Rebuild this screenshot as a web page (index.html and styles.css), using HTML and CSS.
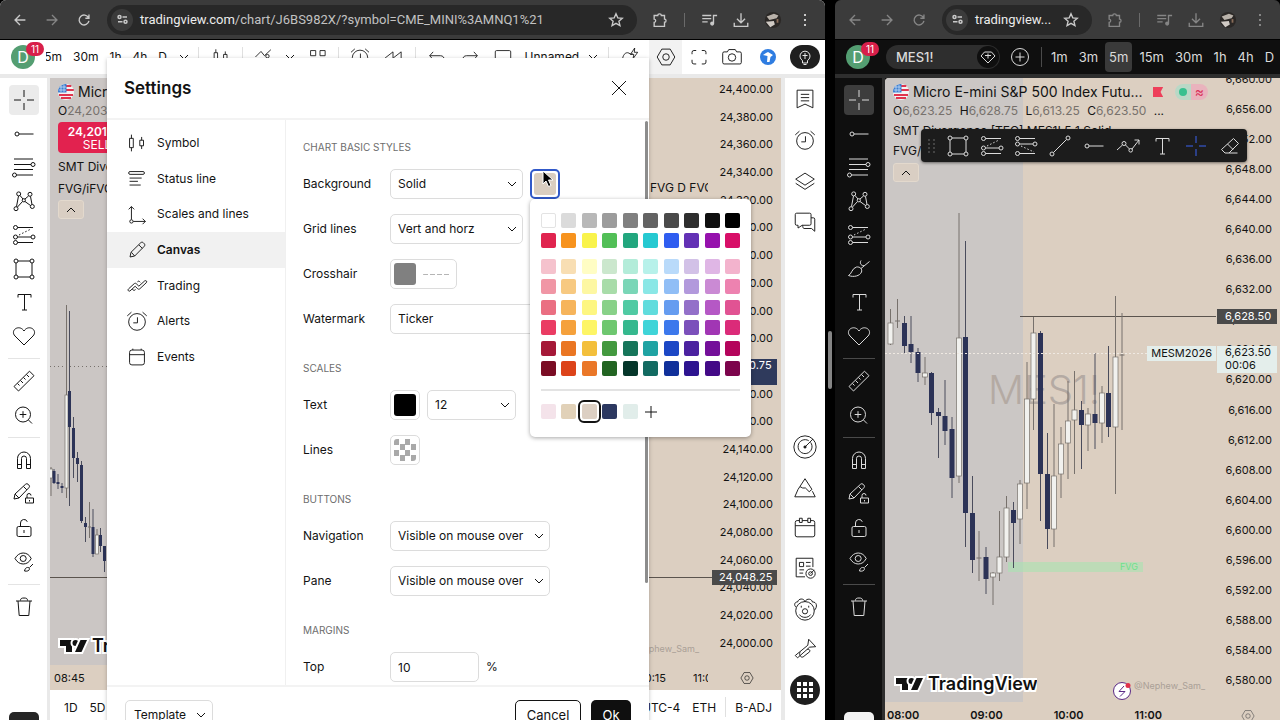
FILE: index.html
```html
<!DOCTYPE html>
<html lang="en">
<head>
	<meta charset="UTF-8">
	<meta name="viewport" content="width=device-width">
	<title>MNQ1! chart settings</title>
	<link rel="stylesheet" href="styles.css">
	<script src="chart.js" defer></script>
</head>
<body>

<!-- icon set, 28px grid unless noted -->
<svg class="sprite" aria-hidden="true">
	<symbol id="i-cross" viewBox="0 0 28 28"><path d="M14 4v7M14 17v7M4 14h7M17 14h7"/></symbol>
	<symbol id="i-hline" viewBox="0 0 28 28"><circle cx="7" cy="14" r="2"/><path d="M9 14h14.500"/></symbol>
	<symbol id="i-fib" viewBox="0 0 28 28"><path d="M4 6h19M4 11.500h17M4 16.500h19M6.500 22H23"/><circle cx="23" cy="11.500" r="2"/><circle cx="4.500" cy="22" r="2"/></symbol>
	<symbol id="i-pattern" viewBox="0 0 28 28"><path d="M6.500 19.500l2-10.500M10 8.500l3 3.500M15 12l3.500-3M20.500 9.500l1.500 8M20.500 18.500L15 14.500M12.500 14.500l-5 5.500"/><circle cx="8.700" cy="6.900" r="2"/><circle cx="20" cy="7.300" r="2"/><circle cx="13.800" cy="13.300" r="1.600"/><circle cx="22.300" cy="19.500" r="2"/><circle cx="6" cy="21.700" r="2"/></symbol>
	<symbol id="i-long" viewBox="0 0 28 28"><path d="M7.500 6.500H23M7.500 16h13.500M7.500 21.500H23"/><path d="M9 14l12-6" stroke-dasharray="1.500 2"/><circle cx="5.500" cy="6.500" r="2"/><circle cx="23" cy="16" r="2"/><circle cx="5.500" cy="16" r="2"/><circle cx="5.500" cy="21.500" r="2"/></symbol>
	<symbol id="i-short" viewBox="0 0 28 28"><path d="M7.500 6.500H23M7.500 12h13.500M7.500 21.500H23"/><path d="M9 14l13 6" stroke-dasharray="1.500 2"/><circle cx="5.500" cy="6.500" r="2"/><circle cx="23" cy="12" r="2"/><circle cx="5.500" cy="12" r="2"/><circle cx="5.500" cy="21.500" r="2"/></symbol>
	<symbol id="i-rect" viewBox="0 0 28 28"><path d="M8 6h12M8 22h12M6 8v12M22 8v12"/><circle cx="6" cy="6" r="2"/><circle cx="22" cy="6" r="2"/><circle cx="6" cy="22" r="2"/><circle cx="22" cy="22" r="2"/></symbol>
	<symbol id="i-text" viewBox="0 0 28 28"><path d="M8 9.500V6.500h13v3M14.500 6.500v15.500M12 22h5"/></symbol>
	<symbol id="i-heart" viewBox="0 0 28 28"><path d="M14 23L5 14C2.300 11.200 3.300 7.500 6.500 6.200c2.800-1.100 5.700 0 7.500 2.800 1.800-2.800 4.700-3.900 7.500-2.800 3.200 1.300 4.200 5 1.500 7.800z"/></symbol>
	<symbol id="i-ruler" viewBox="0 0 28 28"><path d="M4 19.500L19.500 4.200l4.500 4.500L8.500 24zM7.500 16.500l2 2M10.500 13.500l2.500 2.500M13.500 10.500l2 2M16.500 7.500l2.500 2.500"/></symbol>
	<symbol id="i-zoom" viewBox="0 0 28 28"><circle cx="13" cy="13.500" r="7.500"/><path d="M18.500 19l3.500 3.500M13 10.200v6.600M9.700 13.500h6.600"/></symbol>
	<symbol id="i-magnet" viewBox="0 0 28 28"><path d="M7.500 22.500V12.500a6.500 6.500 0 0 1 13 0v10h-4v-10a2.500 2.500 0 0 0-5 0v10zM7.500 18.500h4M16.500 18.500h4"/></symbol>
	<symbol id="i-penlock" viewBox="0 0 28 28"><path d="M4 19l1-5L15.500 4.300a2 2 0 0 1 2.700 0l.7.700a2 2 0 0 1 0 2.700L9 18zM13.500 6.500l3.400 3.400M5.200 14.200L9 18"/><path d="M15.500 18h8v5h-8zM17 18v-2.500a2 2 0 0 1 4 0M19.500 20v1.500"/></symbol>
	<symbol id="i-lock" viewBox="0 0 28 28"><rect x="7" y="12.500" width="14" height="10" rx="1.500"/><path d="M10.500 12.500V9a3.500 3.500 0 0 1 6.800-1.200M14 16v3"/></symbol>
	<symbol id="i-eye" viewBox="0 0 28 28"><path d="M5 10.500C7 7 9.700 5 13.200 5s6.300 2 8 5.500C19.500 14 16.700 16 13.200 16S7 14 5 10.500z"/><circle cx="13.200" cy="10.500" r="3"/><path d="M14.500 23c.5-3 2.500-4.200 4.500-3.200 1.500 2-1 4-4.500 3.200zM19.500 19.500l3.500-3.500"/></symbol>
	<symbol id="i-trash" viewBox="0 0 28 28"><path d="M6 8h16M8 8l1.200 14.500h9.600L20 8M10.500 7.500c0-2 1-2.500 3.500-2.500s3.500.5 3.500 2.500"/></symbol>
	<symbol id="i-brush" viewBox="0 0 28 28"><path d="M3.500 20.500c3-1 3.500-7.500 8-8.500 3.500-.500 6 2 5 5-1.500 4-8 5.500-13 3.500zM16 13.500L24.500 6.500M16 5.500c-2 3.500 1 5.500 3 5"/></symbol>
	<symbol id="i-trend" viewBox="0 0 28 28"><circle cx="6" cy="22" r="2"/><circle cx="22" cy="6" r="2"/><path d="M7.500 20.500l13-13"/></symbol>
	<symbol id="i-path" viewBox="0 0 28 28"><path d="M3 18l5.500-5M11.500 13l4 4M18 17l7-9M20.500 8H25v4.500"/><circle cx="10" cy="11.500" r="2"/><circle cx="16.700" cy="18.300" r="1.800"/></symbol>
	<symbol id="i-eraser" viewBox="0 0 28 28"><path d="M5.500 17.500L17.500 6.500l5 5-9.500 9.500H9zM11.500 12l5.500 5.500M13 21h8.500"/></symbol>
	<symbol id="i-candles" viewBox="0 0 28 28"><path d="M8 5v4M8 19v4M6 9h4v10H6zM19 7.500V11M19 17v3.500M17 11h4v6h-4z"/></symbol>
	<symbol id="i-indicators" viewBox="0 0 28 28"><path d="M4 14l6.500-6.500 4 5L22 5.500M4 22l7-5"/><circle cx="18" cy="13" r="2"/></symbol>
	<symbol id="i-layouts" viewBox="0 0 28 28"><path d="M6.500 6.500h6v6h-6zM17.500 6.500h6v6h-6zM6.500 17h6v5h-6zM17.500 17h6v5h-6z"/></symbol>
	<symbol id="i-alarm" viewBox="0 0 28 28"><circle cx="14" cy="15" r="9"/><path d="M14.500 10v6H10M3.500 8.500L8 4.500M24.500 8.500L20 4.500"/></symbol>
	<symbol id="i-replay" viewBox="0 0 28 28"><path d="M14 8L5 15l9 7zM23.500 8l-9 7 9 7z"/></symbol>
	<symbol id="i-undo" viewBox="0 0 28 28"><path d="M9.500 8L5.500 12.500l4 4.500M5.500 12.500H18c3 0 4.500 2 4.500 5"/></symbol>
	<symbol id="i-redo" viewBox="0 0 28 28"><path d="M18.500 8l4 4.500-4 4.500M22.500 12.500H10c-3 0-4.500 2-4.500 5"/></symbol>
	<symbol id="i-frame" viewBox="0 0 28 28"><rect x="5" y="6.500" width="18" height="15" rx="1.500"/></symbol>
	<symbol id="i-sketch" viewBox="0 0 28 28"><path d="M5 20c0-6 2-11 6-11 3 0 3 3 6 1M19.500 3.500l-5 7.500h4l-1 5 5.500-7.500h-4z"/></symbol>
	<symbol id="i-hex" viewBox="0 0 28 28"><path d="M9.500 5.500h9l5 8.500-5 8.500h-9L4.500 14z"/><circle cx="14" cy="14" r="3.500"/></symbol>
	<symbol id="i-full" viewBox="0 0 28 28"><path d="M6.500 11V9a2 2 0 0 1 2-2h2.500M17 7h2.500a2 2 0 0 1 2 2v2M21.500 17v2.500a2 2 0 0 1-2 2H17M11 21.500H8.500a2 2 0 0 1-2-2V17"/></symbol>
	<symbol id="i-camera" viewBox="0 0 28 28"><path d="M5.500 8.500H9l1.500-2.500h7L19 8.500h3.500a1.500 1.500 0 0 1 1.500 1.500v10a1.500 1.500 0 0 1-1.500 1.500h-17A1.500 1.500 0 0 1 4 20V10a1.500 1.500 0 0 1 1.500-1.500z"/><circle cx="14" cy="14.500" r="4"/></symbol>
	<symbol id="i-chev" viewBox="0 0 10 10"><path d="M1 3l4 4 4-4"/></symbol>
	<symbol id="i-plus" viewBox="0 0 28 28"><path d="M14 8v12M8 14h12"/></symbol>
	<symbol id="i-close" viewBox="0 0 28 28"><path d="M7 7l14 14M21 7L7 21"/></symbol>
	<symbol id="i-status" viewBox="0 0 28 28"><rect x="5" y="6" width="17" height="3" rx="1.500"/><path d="M6 13h13M6 16.500h9M6 20.500h12"/></symbol>
	<symbol id="i-scales" viewBox="0 0 28 28"><path d="M8 20V6M5 9l3-3 3 3M10 22h13M20 19l3 3-3 3"/><circle cx="8" cy="22" r="1.800"/></symbol>
	<symbol id="i-pencil" viewBox="0 0 28 28"><path d="M6.500 21.500l1-5L18 6.200c.8-.8 2-.8 2.800 0l1 1c.8.800.8 2 0 2.800L11.500 20.500zM16 8.500l3.700 3.700M8 16.500l3.500 4"/></symbol>
	<symbol id="i-trading" viewBox="0 0 28 28"><path d="M5 17l6-5.500c.8-.6 1.600-.6 2.200 0L16 14.200l6.300-5.700c1.600-1 2.900.7 1.700 2L17 17c-.8.600-1.500.6-2.200 0L12 14.300l-5.500 5c-1.500 1-3-1-1.500-2.300zM14.500 9.500c.8-1.200 2-.8 3 .5M9 17.500c1 1.500 2.500 1.500 3.500.3"/></symbol>
	<symbol id="i-calendar" viewBox="0 0 28 28"><rect x="6" y="6.500" width="16" height="16" rx="2.500"/><path d="M6 11.500h16M9.500 6.500V5M18.500 6.500V5"/></symbol>
	<symbol id="i-cal2" viewBox="0 0 28 28"><path d="M8 6H5.500A2 2 0 0 0 3.500 8v13.500a2 2 0 0 0 2 2h17a2 2 0 0 0 2-2V8a2 2 0 0 0-2-2H20M11 6h6M3.500 11.500h21M8 3.500h3V8H8zM17 3.500h3V8h-3z"/></symbol>
	<symbol id="i-list" viewBox="0 0 28 28"><path d="M5.500 4.500h17v19L14 19.500l-8.500 4zM9.500 9h9M9.500 12.500h9M9.500 16h9"/></symbol>
	<symbol id="i-layers" viewBox="0 0 28 28"><path d="M14 5.500l10 6.500-10 6.500L4 12zM4 16.500L14 23l10-6.500"/></symbol>
	<symbol id="i-chat" viewBox="0 0 28 28"><path d="M5 4.500h14a1.500 1.500 0 0 1 1.500 1.500v10a1.500 1.500 0 0 1-1.500 1.500H11L6.500 20.500v-3H5A1.500 1.500 0 0 1 3.500 16V6A1.500 1.500 0 0 1 5 4.500zM20.500 9.500h2.500a1.500 1.500 0 0 1 1.500 1.500v13l-3.500-3h-8c-1 0-1.500-1.500-1.500-3.500"/></symbol>
	<symbol id="i-radar" viewBox="0 0 28 28"><circle cx="14" cy="14" r="12"/><path d="M20 9a7.500 7.500 0 1 1-2-1.800M14 14l8.500-8.500"/><circle cx="14" cy="14" r="1.200" fill="currentColor"/></symbol>
	<symbol id="i-pyramid" viewBox="0 0 28 28"><path d="M14 4l7.500 11.500-3 2.500-4-4h-3L8.500 12.500zM6.500 15.500L3 23.500h22l-3-6M6.500 15.500l2-3"/></symbol>
	<symbol id="i-news" viewBox="0 0 28 28"><path d="M14 23.500H4.500v-20h18V13M8 8h4.500v4.500H8zM15 8h5M15 12h5M8 16h5M8 19.500h4"/><circle cx="20" cy="20" r="5"/><circle cx="20" cy="20" r="2"/><path d="M20 20l4-4"/></symbol>
	<symbol id="i-clown" viewBox="0 0 28 28"><circle cx="14" cy="16" r="10"/><circle cx="14" cy="16.500" r="2.800"/><path d="M4.500 12c-3-2-1.500-6 1.500-5.500C7 2.500 12.500 2 14 6c2-4 7.500-3 8 .5 4.500-.5 6 5 2 9M8 20c2.500 4 9.500 4 12 0M10 10.500v2M18 10.500v2"/></symbol>
	<symbol id="i-horn" viewBox="0 0 28 28"><path d="M3.500 21L17 10l1-6.500 7.500 8-6.500.5L6 23.500zM9 17c-2 2 0 7 3 5.500l7-5.500c1-2-1-3-2.500-2.500"/></symbol>
	<symbol id="i-back" viewBox="0 0 20 20"><path d="M16 10H5M10 4.500L4.500 10l5.500 5.500"/></symbol>
	<symbol id="i-fwd" viewBox="0 0 20 20"><path d="M4 10h11M10 4.500l5.500 5.500-5.500 5.500"/></symbol>
	<symbol id="i-reload" viewBox="0 0 20 20"><path d="M15 7.500A5.500 5.500 0 1 0 15.500 11M15.500 4v4H11.500"/></symbol>
	<symbol id="i-tune" viewBox="0 0 20 20"><circle cx="6" cy="6.500" r="2"/><path d="M10 6.500h6M4 13h6"/><circle cx="14" cy="13" r="2"/></symbol>
	<symbol id="i-star" viewBox="0 0 20 20"><path d="M10 3l2 4.600 5 .5-3.800 3.300 1.200 4.900L10 13.700l-4.400 2.600 1.200-4.900L3 8.100l5-.5z"/></symbol>
	<symbol id="i-puzzle" viewBox="0 0 20 20"><path d="M3.500 5h4c0-2.500 4-2.500 4 0H15v4c2.300 0 2.300 3.500 0 3.500V17H3.500v-4.300c2.300-.2 2.300-3.400 0-3.600z"/></symbol>
	<symbol id="i-queue" viewBox="0 0 20 20"><path d="M2.500 5h10M2.500 8.500h10M2.500 12h6M15 14V5H19"/><circle cx="13.500" cy="14" r="1.500" fill="currentColor"/></symbol>
	<symbol id="i-down" viewBox="0 0 20 20"><path d="M10 2.500v10M5.500 8.500l4.500 4.500 4.500-4.500M2.500 13v4h15v-4"/></symbol>
	<symbol id="i-flag" viewBox="0 0 16 16"><circle cx="8" cy="8" r="8" fill="#f4f4f4" stroke="none"/><path d="M8 2h5.300M8 6h7.800M1 11h14M3 14h10" stroke="#e0354f" stroke-width="2"/><path d="M0 8.500A8 8 0 0 1 8.500 0v8.500z" fill="#3c7fd0" stroke="none"/><path d="M2 3h6M1 6h7M3 2v6M6 1v7" stroke="#d6e6fa" stroke-width=".7"/></symbol>
	<symbol id="i-face" viewBox="0 0 20 20"><circle cx="10" cy="10" r="9" fill="#2b2826" stroke="none"/><path d="M3 6l8-3 5 2-2 3-8 2z" fill="#b9b2aa" stroke="none"/><path d="M2 12l9-1 1 4-5 3z" fill="#d0cac4" stroke="none"/><path d="M15 9v4" stroke="#8a6d5a" stroke-width="2"/></symbol>
	<symbol id="i-logo" viewBox="0 0 146 26">
		<g class="logo-ink"><path d="M5 7h12v12h-6v-6H5z"/><circle cx="20.500" cy="10" r="3"/><path d="M25.500 7H32l-5.500 12H20z"/></g>
		<text x="37" y="19" class="logo-word">TradingView</text>
	</symbol>
</svg>

<div class="split">

<section class="window light" aria-label="Nasdaq window">
	<header class="chrome">
		<button class="nav-btn" aria-label="Back"><svg><use href="#i-back"/></svg></button>
		<button class="nav-btn dim" aria-label="Forward"><svg><use href="#i-fwd"/></svg></button>
		<button class="nav-btn" aria-label="Reload"><svg><use href="#i-reload"/></svg></button>
		<div class="omnibox">
			<span class="site-info"><svg><use href="#i-tune"/></svg></span>
			<span class="url">tradingview.com<span class="url-path">/chart/J6BS982X/?symbol=CME_MINI%3AMNQ1%21</span></span>
			<svg><use href="#i-star"/></svg>
		</div>
		<button class="nav-btn" aria-label="Extensions"><svg><use href="#i-puzzle"/></svg></button>
		<span class="chrome-sep"></span>
		<button class="nav-btn" aria-label="Media"><svg><use href="#i-queue"/></svg></button>
		<button class="nav-btn" aria-label="Downloads"><svg><use href="#i-down"/></svg></button>
		<button class="nav-btn" aria-label="Profile"><svg><use href="#i-face"/></svg></button>
		<button class="nav-btn dots" aria-label="Menu"><i></i><i></i><i></i></button>
	</header>

	<div class="topbar">
		<button class="avatar" aria-label="Account">D<span class="badge">11</span></button>
		<div class="intervals">
			<button class="cut">15m</button>
			<button>30m</button>
			<button>1h</button>
			<button>4h</button>
			<button>D</button>
		</div>
		<div class="tools">
			<svg class="chev"><use href="#i-chev"/></svg>
			<i class="vsep"></i>
			<svg><use href="#i-candles"/></svg>
			<i class="vsep"></i>
			<svg><use href="#i-indicators"/></svg>
			<svg class="chev"><use href="#i-chev"/></svg>
			<svg><use href="#i-layouts"/></svg>
			<i class="vsep"></i>
			<svg><use href="#i-alarm"/></svg>
			<svg><use href="#i-replay"/></svg>
			<i class="vsep"></i>
			<svg><use href="#i-undo"/></svg>
			<svg><use href="#i-redo"/></svg>
			<svg><use href="#i-frame"/></svg>
			<button>Unnamed</button>
			<svg class="chev"><use href="#i-chev"/></svg>
			<i class="vsep"></i>
			<svg><use href="#i-sketch"/></svg>
		</div>
		<button class="sq on" aria-label="Settings"><svg><use href="#i-hex"/></svg></button>
		<button class="sq" aria-label="Fullscreen"><svg><use href="#i-full"/></svg></button>
		<button class="sq" aria-label="Snapshot"><svg><use href="#i-camera"/></svg></button>
		<button class="round blue" aria-label="Publish"><svg viewBox="0 0 16 16"><circle cx="8" cy="8" r="8"/><path d="M3 6l3-2 2-1 5 3-2.500 2L9.500 13H7l.5-6z"/></svg></button>
		<button class="round bulb" aria-label="Ideas"><svg viewBox="0 0 20 20"><path d="M7.500 13.500a5 5 0 1 1 5 0V16h-5zM10 6v6M7.500 8.500h5M8.500 17.500h3"/></svg></button>
	</div>

	<div class="workspace">
		<nav class="drawbar" aria-label="Drawing tools">
			<div class="grp g8">
				<button class="on" aria-label="Cross"><svg><use href="#i-cross"/></svg></button>
				<button aria-label="Horizontal ray"><svg><use href="#i-hline"/></svg></button>
				<button aria-label="Fib retracement"><svg><use href="#i-fib"/></svg></button>
				<button aria-label="Pattern"><svg><use href="#i-pattern"/></svg></button>
				<button aria-label="Long position"><svg><use href="#i-long"/></svg></button>
				<button aria-label="Rectangle"><svg><use href="#i-rect"/></svg></button>
				<button aria-label="Text"><svg><use href="#i-text"/></svg></button>
				<button aria-label="Favourites"><svg><use href="#i-heart"/></svg></button>
			</div>
			<div class="grp g2">
				<button aria-label="Measure"><svg><use href="#i-ruler"/></svg></button>
				<button aria-label="Zoom in"><svg><use href="#i-zoom"/></svg></button>
			</div>
			<div class="grp g4">
				<button aria-label="Magnet"><svg><use href="#i-magnet"/></svg></button>
				<button aria-label="Stay in drawing mode"><svg><use href="#i-penlock"/></svg></button>
				<button aria-label="Lock drawings"><svg><use href="#i-lock"/></svg></button>
				<button aria-label="Hide drawings"><svg><use href="#i-eye"/></svg></button>
			</div>
			<div class="grp">
				<button aria-label="Remove"><svg><use href="#i-trash"/></svg></button>
			</div>
			<button class="more" aria-label="More tools"><svg><use href="#i-plus"/></svg></button>
		</nav>

		<div class="center">
			<div class="chart">
				<div class="plot plot-mnq">
					<svg class="candles" id="mnq" viewBox="0 0 662 587" preserveAspectRatio="none"></svg>
					<div class="legend">
						<h2><svg><use href="#i-flag"/></svg>Micro E-mini Nasdaq-100</h2>
						<p class="ohlc">O<b>24,203.25</b></p>
						<button class="sell"><strong>24,201.00</strong>SELL</button>
						<p class="study">SMT Divergence [TFO]</p>
						<p class="study">FVG/iFVG</p>
						<button class="fold" aria-label="Collapse"><svg class="chev"><use href="#i-chev"/></svg></button>
					</div>
					<span class="study-tail">FVG D FVG</span>
					<svg class="logo"><use href="#i-logo"/></svg>
					<span class="credit">@Nephew_Sam_</span>
				</div>
				<div class="axis">
					<ul data-from="24400" data-step="20" data-count="21"></ul>
					<span class="tag last">24,200.75<br>00:06</span>
					<span class="tag cursor">24,048.25</span>
				</div>
				<div class="times"><span>08:45</span><span class="t-mid">10:15</span><span class="t-end">11:00</span></div>
				<button class="axis-gear" aria-label="Scale settings"><svg><use href="#i-hex"/></svg></button>
			</div>
			<footer class="ranges">
				<button>1D</button><button>5D</button>
				<button class="push">UTC-4</button><button>ETH</button><i class="vsep"></i><button>B-ADJ</button>
			</footer>
		</div>

		<aside class="sidebar">
			<div class="side-top">
				<button aria-label="Watchlist"><svg><use href="#i-list"/></svg></button>
				<button aria-label="Alerts"><svg><use href="#i-alarm"/></svg></button>
				<button aria-label="Object tree"><svg><use href="#i-layers"/></svg></button>
				<button aria-label="Chats"><svg><use href="#i-chat"/></svg></button>
			</div>
			<div class="side-bottom">
				<button aria-label="Screener"><svg><use href="#i-radar"/></svg></button>
				<button aria-label="Pine"><svg><use href="#i-pyramid"/></svg></button>
				<button aria-label="Calendar"><svg><use href="#i-cal2"/></svg></button>
				<button aria-label="News"><svg><use href="#i-news"/></svg></button>
				<button aria-label="Community"><svg><use href="#i-clown"/></svg></button>
				<button aria-label="Notifications"><svg><use href="#i-horn"/></svg></button>
				<button class="apps" aria-label="Products"><svg viewBox="0 0 30 30"><circle cx="15" cy="15" r="15"/><path d="M7 7h4v4H7zM13 7h4v4h-4zM19 7h4v4h-4zM7 13h4v4H7zM13 13h4v4h-4zM19 13h4v4h-4zM7 19h4v4H7zM13 19h4v4h-4zM19 19h4v4h-4z"/></svg></button>
			</div>
		</aside>
	</div>

	<!-- settings dialog floats above the chart -->
	<div class="dialog" role="dialog" aria-labelledby="dlg-title">
		<header class="dlg-head">
			<h1 id="dlg-title">Settings</h1>
			<button aria-label="Close"><svg><use href="#i-close"/></svg></button>
		</header>
		<div class="dlg-body">
			<nav class="tabs">
				<a href="#symbol"><svg><use href="#i-candles"/></svg>Symbol</a>
				<a href="#status"><svg><use href="#i-status"/></svg>Status line</a>
				<a href="#scales"><svg><use href="#i-scales"/></svg>Scales and lines</a>
				<a href="#canvas" class="on"><svg><use href="#i-pencil"/></svg>Canvas</a>
				<a href="#trading"><svg><use href="#i-trading"/></svg>Trading</a>
				<a href="#alerts"><svg><use href="#i-alarm"/></svg>Alerts</a>
				<a href="#events"><svg><use href="#i-calendar"/></svg>Events</a>
			</nav>
			<form class="pane">
				<h3>Chart basic styles</h3>
				<div class="row"><label for="bg">Background</label>
					<span class="pick w133"><select id="bg"><option>Solid</option></select><svg class="chev"><use href="#i-chev"/></svg></span>
					<button type="button" class="swatch open" aria-label="Background color"><i class="c-sand"></i></button>
				</div>
				<div class="row"><label for="grid">Grid lines</label>
					<span class="pick w133"><select id="grid"><option>Vert and horz</option></select><svg class="chev"><use href="#i-chev"/></svg></span>
				</div>
				<div class="row"><label for="cross">Crosshair</label>
					<button type="button" id="cross" class="swatch wide"><i class="c-grey"></i><i class="dash"></i></button>
				</div>
				<div class="row"><label for="wm">Watermark</label>
					<span class="pick w160"><select id="wm"><option>Ticker</option></select><svg class="chev"><use href="#i-chev"/></svg></span>
				</div>
				<h3>Scales</h3>
				<div class="row"><label for="size">Text</label>
					<button type="button" class="swatch" aria-label="Text color"><i class="c-black"></i></button>
					<span class="pick w89"><select id="size"><option>12</option></select><svg class="chev"><use href="#i-chev"/></svg></span>
				</div>
				<div class="row"><label for="lines">Lines</label>
					<button type="button" id="lines" class="swatch"><i class="c-none"></i></button>
				</div>
				<h3>Buttons</h3>
				<div class="row"><label for="navb">Navigation</label>
					<span class="pick w160"><select id="navb"><option>Visible on mouse over</option></select><svg class="chev"><use href="#i-chev"/></svg></span>
				</div>
				<div class="row"><label for="paneb">Pane</label>
					<span class="pick w160"><select id="paneb"><option>Visible on mouse over</option></select><svg class="chev"><use href="#i-chev"/></svg></span>
				</div>
				<h3>Margins</h3>
				<div class="row"><label for="top">Top</label>
					<input id="top" type="text" value="10"><span>%</span>
				</div>
			</form>
			<i class="scroll-thumb"></i>
		</div>
		<footer class="dlg-foot">
			<button class="tpl">Template<svg class="chev"><use href="#i-chev"/></svg></button>
			<button class="cancel">Cancel</button>
			<button class="ok">Ok</button>
		</footer>

		<div class="palette" role="group" aria-label="Colors">
			<div class="shades base" id="base"></div>
			<div class="shades tints" id="tints"></div>
			<div class="shades custom" id="custom"></div>
		</div>
		<svg class="pointer" viewBox="0 0 12 18"><path d="M1 1v13l3-3 2.500 5.500 2.500-1L6.500 10H11z"/></svg>
	</div>
</section>

<div class="divider"><i></i></div>

<section class="window dark" aria-label="S&amp;P window">
	<header class="chrome">
		<button class="nav-btn dim" aria-label="Back"><svg><use href="#i-back"/></svg></button>
		<button class="nav-btn dim" aria-label="Forward"><svg><use href="#i-fwd"/></svg></button>
		<button class="nav-btn dim" aria-label="Reload"><svg><use href="#i-reload"/></svg></button>
		<div class="omnibox">
			<span class="site-info"><svg><use href="#i-tune"/></svg></span>
			<span class="url">tradingview...</span>
			<svg><use href="#i-star"/></svg>
		</div>
		<button class="nav-btn dim" aria-label="Extensions"><svg><use href="#i-puzzle"/></svg></button>
		<span class="chrome-sep"></span>
		<button class="nav-btn dim" aria-label="Media"><svg><use href="#i-queue"/></svg></button>
		<button class="nav-btn dim" aria-label="Downloads"><svg><use href="#i-down"/></svg></button>
		<button class="nav-btn" aria-label="Profile"><svg><use href="#i-face"/></svg></button>
		<button class="nav-btn dots dim" aria-label="Menu"><i></i><i></i><i></i></button>
	</header>

	<div class="topbar">
		<button class="avatar" aria-label="Account">D<span class="badge">11</span></button>
		<button class="symbol">MES1!<svg viewBox="0 0 24 24"><circle cx="12" cy="12" r="11"/><path d="M8.500 7h7L19 11l-7 7-7-7zM9 10.500h6M12 8.500v5"/></svg></button>
		<button class="add" aria-label="Compare"><svg viewBox="0 0 20 20"><circle cx="10" cy="10" r="8.500"/><path d="M10 5.500v9M5.500 10h9"/></svg></button>
		<i class="vsep"></i>
		<div class="intervals">
			<button>1m</button>
			<button>3m</button>
			<button class="on">5m</button>
			<button>15m</button>
			<button>30m</button>
			<button>1h</button>
			<button>4h</button>
			<button>D</button>
		</div>
	</div>

	<div class="workspace">
		<nav class="drawbar" aria-label="Drawing tools">
			<div class="grp g8">
				<button class="on" aria-label="Cross"><svg><use href="#i-cross"/></svg></button>
				<button aria-label="Horizontal ray"><svg><use href="#i-hline"/></svg></button>
				<button aria-label="Fib retracement"><svg><use href="#i-fib"/></svg></button>
				<button aria-label="Pattern"><svg><use href="#i-pattern"/></svg></button>
				<button aria-label="Long position"><svg><use href="#i-long"/></svg></button>
				<button aria-label="Brush"><svg><use href="#i-brush"/></svg></button>
				<button aria-label="Text"><svg><use href="#i-text"/></svg></button>
				<button aria-label="Favourites"><svg><use href="#i-heart"/></svg></button>
			</div>
			<div class="grp g2">
				<button aria-label="Measure"><svg><use href="#i-ruler"/></svg></button>
				<button aria-label="Zoom in"><svg><use href="#i-zoom"/></svg></button>
			</div>
			<div class="grp g4">
				<button aria-label="Magnet"><svg><use href="#i-magnet"/></svg></button>
				<button aria-label="Stay in drawing mode"><svg><use href="#i-penlock"/></svg></button>
				<button aria-label="Lock drawings"><svg><use href="#i-lock"/></svg></button>
				<button aria-label="Hide drawings"><svg><use href="#i-eye"/></svg></button>
			</div>
			<div class="grp">
				<button aria-label="Remove"><svg><use href="#i-trash"/></svg></button>
			</div>
			<button class="more" aria-label="More tools"><svg><use href="#i-plus"/></svg></button>
		</nav>

		<div class="chart">
			<div class="plot plot-mes">
				<span class="watermark">MES1!</span>
				<svg class="candles" id="mes" viewBox="0 0 331 624" preserveAspectRatio="none"></svg>
				<div class="legend">
					<h2><svg><use href="#i-flag"/></svg>Micro E-mini S&amp;P 500 Index Futu...
						<i class="mark"></i><span class="state"><i></i><em>≈</em></span></h2>
					<p class="ohlc">O<b>6,623.25</b> H<b>6,628.75</b> L<b>6,613.25</b> C<b>6,623.50</b> ...</p>
					<p class="study">SMT Divergence [TFO] MES1! 5 1 Solid</p>
					<p class="study">FVG/iFVG</p>
					<button class="fold" aria-label="Collapse"><svg class="chev"><use href="#i-chev"/></svg></button>
				</div>
				<svg class="logo"><use href="#i-logo"/></svg>
				<svg class="flash" viewBox="0 0 20 20"><circle cx="10" cy="10" r="8.500"/><path d="M12 5l-5 5.500h6L8 15.500"/><circle class="red" cx="16" cy="4.500" r="2.500"/></svg>
				<span class="credit">@Nephew_Sam_</span>
				<span class="contract">MESM2026</span>
			</div>
			<div class="axis">
				<ul data-from="6660" data-step="4" data-count="21"></ul>
				<span class="tag last">6,623.50<br>00:06</span>
				<span class="tag cursor">6,628.50</span>
			</div>
			<div class="times"><span>08:00</span><span>09:00</span><span>10:00</span><span>11:00</span></div>
			<button class="axis-gear" aria-label="Scale settings"><svg><use href="#i-hex"/></svg></button>
		</div>
	</div>

	<div class="favorites" role="toolbar" aria-label="Favourite tools">
		<svg class="grip" viewBox="0 0 10 14"><path d="M1 1h2M6 1h2M1 5h2M6 5h2M1 9h2M6 9h2M1 13h2M6 13h2"/></svg>
		<button aria-label="Rectangle"><svg><use href="#i-rect"/></svg></button>
		<button aria-label="Long position"><svg><use href="#i-long"/></svg></button>
		<button aria-label="Short position"><svg><use href="#i-short"/></svg></button>
		<button aria-label="Trend line"><svg><use href="#i-trend"/></svg></button>
		<button aria-label="Horizontal ray"><svg><use href="#i-hline"/></svg></button>
		<button aria-label="Path"><svg><use href="#i-path"/></svg></button>
		<button aria-label="Text"><svg><use href="#i-text"/></svg></button>
		<button class="on" aria-label="Cross"><svg><use href="#i-cross"/></svg></button>
		<button aria-label="Eraser"><svg><use href="#i-eraser"/></svg></button>
	</div>
</section>

</div>
</body>
</html>
```

FILE: styles.css
```css
* { box-sizing: border-box; }

body {
	margin: 0;
	background: #000;
	color: #131313;
	font-family: Inter, "Liberation Sans", sans-serif;
	font-size: 12px;
	line-height: 16px;
	overflow: hidden;
}

button, select, input {
	font: inherit;
	color: inherit;
	background: none;
	border: 0;
	padding: 0;
	margin: 0;
}

h1, h2, h3, p, ul { margin: 0; padding: 0; list-style: none; font-weight: 400; }
i { display: block; }

svg {
	display: block;
	flex: none;
	width: 28px;
	height: 28px;
	fill: none;
	stroke: currentColor;
	stroke-width: 1;
}

.sprite { position: absolute; width: 0; height: 0; }
svg.chev { width: 10px; height: 10px; }

.split {
	display: grid;
	grid-template-columns: minmax(0, 1fr) 10px 445px;
	height: 100vh;
}

.divider { display: flex; align-items: center; justify-content: center; }
.divider i { width: 4px; height: 58px; border-radius: 2px; background: #858585; }

.window {
	position: relative;
	display: grid;
	grid-template-rows: 40px 38px minmax(0, 1fr);
	overflow: hidden;
	border-radius: 6px 6px 0 0;
}
.light { background: #fff; --line: #e9e9e9; --hover: #ebebeb; }
.dark { background: #0f0f0f; color: #dbdbdb; --line: #2e2e2e; --hover: #3d3d3d; }

/* browser chrome */
.chrome {
	display: flex;
	align-items: center;
	padding: 0 4px;
	background: #3b3b3b;
	border-bottom: 1px solid #000;
	color: #c9c9c9;
}
.chrome svg { width: 18px; height: 18px; stroke-width: 1.5; }
.nav-btn { display: flex; justify-content: center; width: 32px; }
.nav-btn.dim, .dark .chrome-sep { color: #858585; }
.omnibox {
	display: flex;
	align-items: center;
	flex: 1;
	min-width: 0;
	height: 30px;
	margin: 0 7px;
	padding: 0 12px 0 4px;
	border-radius: 15px;
	background: #282828;
	font-family: Roboto, sans-serif;
	font-size: 13px;
}
.site-info {
	display: flex;
	align-items: center;
	justify-content: center;
	width: 22px;
	height: 22px;
	margin-right: 7px;
	border-radius: 50%;
	background: #3b3b3b;
}
.site-info svg { width: 15px; height: 15px; stroke-width: 2; }
.url { flex: 1; color: #ececec; white-space: nowrap; }
.url-path { color: #c2c2c2; }
.chrome-sep { width: 1px; height: 14px; margin: 0 8px; background: #6a6a6a; }
.dots { flex-direction: column; align-items: center; gap: 3px; }
.dots i { width: 2px; height: 2px; background: currentColor; }

/* top toolbar */
.topbar {
	display: flex;
	align-items: center;
	border-bottom: 4px solid var(--line);
}
.avatar {
	position: relative;
	flex: none;
	width: 24px;
	height: 24px;
	margin: 0 11px;
	border-radius: 50%;
	background: #549e72;
	color: #fff;
	font-size: 16px;
	line-height: 24px;
}
.badge {
	position: absolute;
	top: -3px;
	left: 15px;
	padding: 0 5px;
	border-radius: 7px;
	background: #d81f4a;
	font-size: 10px;
	line-height: 14px;
}
.intervals { display: flex; align-items: center; gap: 11px; }
.intervals .cut { display: flex; justify-content: flex-end; width: 16px; overflow: hidden; }
.tools {
	display: flex;
	align-items: center;
	justify-content: space-between;
	flex: 1;
	margin: 0 7px 0 12px;
}
.tools svg:not(.chev) { width: 24px; height: 24px; }
.vsep { width: 1px; height: 20px; background: #e0e0e0; }
.sq {
	display: flex;
	align-items: center;
	justify-content: center;
	align-self: stretch;
	width: 33px;
}
.sq svg { width: 26px; height: 26px; }
.topbar .sq.on { background: #f2f2f2; }
.round { display: flex; align-items: center; justify-content: center; height: 24px; }
.blue { width: 40px; }
.blue svg { width: 16px; height: 16px; fill: #2f7de1; stroke: none; }
.blue path { fill: #fff; }
.bulb { width: 30px; margin: 0 5px 0 2px; border-radius: 12px; background: #1f1f1f; color: #e8e8e8; }
.bulb svg { width: 20px; height: 20px; }

.dark .avatar { margin-right: 16px; }
.symbol {
	display: flex;
	align-items: center;
	justify-content: space-between;
	width: 114px;
	height: 24px;
	padding-left: 10px;
	border-radius: 12px;
	background: #2e2e2e;
	font-size: 13px;
	font-weight: 500;
}
.symbol svg { width: 24px; height: 24px; }
.symbol circle { fill: #0f0f0f; stroke: none; }
.add { margin: 0 11px 0 10px; }
.add svg { width: 20px; height: 20px; }
.dark .vsep { background: #4a4a4a; }
.dark .intervals { margin-left: 9px; font-size: 13px; }
.dark .intervals .on {
	margin: 0 -4px;
	padding: 7px 4px;
	border-radius: 4px;
	background: #3a3a3a;
}

/* workspace */
.workspace { display: flex; min-height: 0; overflow: hidden; }
.drawbar {
	display: flex;
	flex-direction: column;
	flex: none;
	width: 50px;
	padding-top: 5px;
	border-right: 3px solid var(--line);
}
.grp { display: flex; flex-direction: column; flex: none; height: 34px; }
.grp + .grp { margin-top: 5px; padding-top: 5px; box-sizing: content-box; }
.grp + .grp::before {
	content: "";
	align-self: center;
	width: 32px;
	height: 1px;
	margin-top: -5px;
	margin-bottom: 5px;
	background: #e4e4e4;
}
.dark .grp + .grp::before { background: #4a4a4a; }
.g8 { height: 270px; }
.grp.g2 { height: 69px; }
.grp.g4 { height: 137px; }
.grp button {
	display: flex;
	align-items: center;
	justify-content: center;
	flex: 1 1 0;
	min-height: 0;
}
.grp .on svg { width: 30px; height: 30px; padding: 1px; border-radius: 4px; background: var(--hover); }
.more {
	flex: none;
	align-self: center;
	width: 30px;
	height: 30px;
	margin: auto 0 -22px;
	border-radius: 5px;
	background: #262626;
	color: #fff;
}
.more svg { width: 30px; height: 30px; stroke-width: 2; }
.dark .more { background: #f2f2f2; color: #000; }

.center { display: flex; flex-direction: column; flex: 1; min-width: 0; }
.chart {
	display: grid;
	flex: 1;
	grid-template: minmax(0, 1fr) 25px / minmax(0, 1fr) 69px;
	min-width: 0;
	background: #dccfc1;
	color: #131313;
	overflow: hidden;
}
.dark .chart { grid-template: minmax(0, 1fr) 18px / minmax(0, 1fr) 64px; border-radius: 4px 0 0 0; }
.plot { position: relative; overflow: hidden; }
.plot-mnq { background: linear-gradient(90deg, #cbc6c4 140px, #dccfc1 140px); }
.plot-mes { background: linear-gradient(90deg, #cbc7c5 138px, #dccfc1 138px); }
.candles { position: absolute; inset: 0; width: 100%; height: 100%; }
.up { fill: #f1f1ee; stroke: #77716c; stroke-width: .7; }
.down { fill: #2c3357; stroke: none; }
.wick { stroke: #77716c; }
.wick-down { stroke: #4a4c5c; }
.level { stroke: #5b544e; }
.dotted { stroke: #77716c; stroke-dasharray: 1 3; }
.dark .dotted { stroke: #efe9e2; stroke-dasharray: 2 2; }
.gap { fill: #a9e3b0; fill-opacity: .6; stroke: none; }
.gap-name { fill: #6fe08c; stroke: none; font-size: 9px; }

.legend { position: relative; padding: 5px 8px; white-space: nowrap; }
.legend h2 { display: flex; align-items: center; gap: 4px; font-size: 14px; line-height: 18px; }
.legend h2 svg { width: 16px; height: 16px; }
.ohlc { line-height: 20px; }
.ohlc b { margin-right: 4px; font-weight: 400; color: #77716c; }
.study { line-height: 20px; }
.light .study { line-height: 22px; }
.sell {
	display: block;
	width: 78px;
	height: 31px;
	margin: 1px 0 3px;
	border-radius: 4px;
	background: #e2224f;
	color: #fff;
	line-height: 13px;
}
.sell strong { display: block; font-weight: 600; }
.fold {
	display: flex;
	align-items: center;
	justify-content: center;
	width: 26px;
	height: 19px;
	margin-top: 2px;
	border: 1px solid #e3d9cd;
	border-radius: 3px;
	background: #d9cec3;
}
.light .fold { margin-top: 0; }
.fold svg { transform: rotate(180deg); }
.mark {
	width: 11px;
	height: 10px;
	margin-left: 6px;
	background: #ee3f5a;
	clip-path: polygon(0 0, 100% 0, 75% 50%, 100% 100%, 0 100%);
}
.state {
	display: flex;
	align-items: center;
	justify-content: space-around;
	width: 34px;
	height: 16px;
	margin-left: 8px;
	border-radius: 8px;
	background: linear-gradient(90deg, #b9d8c6 50%, #e9b3bd 50%);
}
.state i { width: 8px; height: 8px; border-radius: 50%; background: #38c08f; }
.state em { font-style: normal; color: #d9305a; }
.study-tail { position: absolute; top: 102px; right: 4px; width: 58px; overflow: hidden; white-space: nowrap; }
.logo { position: absolute; left: 5px; bottom: 6px; width: 146px; height: 26px; }
.dark .logo { left: 6px; bottom: 5px; }
.logo-ink { fill: #111; stroke: #fff; stroke-width: 4; paint-order: stroke; }
.logo-word {
	fill: #111;
	stroke: #fff;
	stroke-width: 4;
	paint-order: stroke;
	font-size: 18px;
	font-weight: 600;
}
.credit { position: absolute; right: 13px; bottom: 8px; font-size: 9px; color: #aaa097; }
.dark .credit { right: 11px; }
.flash { position: absolute; right: 84px; bottom: 1px; width: 20px; height: 20px; fill: #fff; stroke: #5b2a86; }
.flash .red { fill: #e0304a; stroke: none; }
.watermark {
	position: absolute;
	top: 288px;
	left: 103px;
	font-size: 40px;
	font-weight: 300;
	line-height: 48px;
	color: #b4aaa3;
}
.contract {
	position: absolute;
	top: 268px;
	right: 0;
	padding: 0 4px;
	background: #e4eeeb;
	font-size: 11px;
	line-height: 15px;
}

.axis { position: relative; font-size: 11px; text-align: right; }
.axis ul {
	display: flex;
	flex-direction: column;
	justify-content: space-between;
	height: 100%;
	padding: 3px 8px 14px 0;
	line-height: 16px;
}
.dark .axis ul { height: auto; position: absolute; inset: -7px 0 14px; padding: 0 8px 0 0; }
.tag { position: absolute; right: 4px; padding: 0 4px; line-height: 13px; text-align: left; }
.tag.last { top: 281px; width: 65px; background: #2f3a5c; color: #fff; }
.tag.cursor { top: 492px; width: 65px; line-height: 15px; background: #4a4a4a; color: #fff; }
.light .tag { padding-left: 7px; }
.dark .tag { right: 3px; padding-left: 8px; }
.dark .tag.last { top: 268px; width: 60px; padding-bottom: 1px; background: #e4eeeb; color: #131313; }
.dark .tag.cursor { top: 231px; width: 60px; }
.times {
	display: flex;
	align-items: center;
	padding-left: 4px;
	overflow: hidden;
	font-size: 11px;
	white-space: nowrap;
}
.t-mid { margin-left: auto; }
.t-end { width: 15px; margin: 0 4px 0 27px; overflow: hidden; }
.dark .times { gap: 51px; align-items: flex-start; padding: 5px 0 0 2px; font-weight: 600; }
.axis-gear { display: flex; align-items: center; justify-content: center; }
.axis-gear svg { width: 18px; height: 18px; }
.dark .axis-gear { align-items: flex-start; padding-top: 5px; color: #555; }

.ranges { display: flex; gap: 12px; height: 30px; padding: 3px 9px 0 14px; }
.ranges button { height: 30px; }
.ranges .push { margin-left: auto; }
.ranges .vsep { align-self: center; margin: 0 -3px; }

.sidebar {
	display: flex;
	flex-direction: column;
	justify-content: space-between;
	flex: none;
	width: 44px;
	border-left: 4px solid var(--line);
}
.sidebar button { display: flex; align-items: center; justify-content: center; flex: 1; }
.sidebar svg { width: 26px; height: 26px; }
.side-top, .side-bottom { display: flex; flex-direction: column; height: 164px; }
.side-bottom { height: 283px; margin-bottom: 10px; }
.sidebar .apps svg { width: 30px; height: 30px; fill: #1f1f1f; stroke: none; }
.apps path { fill: #fff; }

/* settings dialog */
.dialog {
	position: absolute;
	top: 58px;
	left: 107px;
	display: flex;
	flex-direction: column;
	width: 542px;
	height: 700px;
	background: #fff;
	box-shadow: 0 1px 4px rgba(0, 0, 0, .25);
}
.dlg-head {
	display: flex;
	align-items: center;
	justify-content: space-between;
	height: 62px;
	padding: 0 16px 0 17px;
	border-bottom: 2px solid #f3f3f3;
}
.dlg-head h1 { font-size: 17px; font-weight: 600; line-height: 20px; }
.dlg-body { display: flex; height: 565px; overflow: hidden; }
.tabs {
	display: flex;
	flex-direction: column;
	flex: none;
	width: 179px;
	padding: 5px 0 310px;
	border-right: 1px solid #f0f0f0;
}
.tabs a {
	display: flex;
	align-items: center;
	flex: 1;
	gap: 7px;
	padding-left: 17px;
	color: inherit;
	text-decoration: none;
}
.tabs a svg { width: 26px; height: 26px; }
.tabs .on { background: #f1f1f1; font-weight: 600; }
.pane { flex: 1; padding: 20px 0 0 17px; }
.pane h3 {
	margin-bottom: 15px;
	font-size: 10px;
	line-height: 14px;
	color: #6d6d6d;
	text-transform: uppercase;
}
.row { display: flex; align-items: center; gap: 7px; height: 30px; margin-bottom: 15px; }
.row + h3 { margin-top: 27px; }
.row label { width: 80px; }
.pick { position: relative; display: flex; align-items: center; }
.pick select, .row input, .swatch {
	appearance: none;
	height: 30px;
	width: 100%;
	padding-left: 7px;
	border: 1px solid #dcdcdc;
	border-radius: 5px;
}
.pick svg { position: absolute; right: 6px; }
.w133 { width: 133px; }
.w160 { width: 160px; }
.w89, .row input { width: 89px; }
.row .swatch { display: flex; align-items: center; width: 30px; padding: 0 0 0 3px; }
.row .wide { width: 67px; }
.row .open { padding-left: 2px; border: 2px solid #3159c9; }
.swatch i { width: 22px; height: 22px; border-radius: 3px; }
.c-sand { background: #d9cdc0; }
.c-grey { background: #808080; }
.c-black { background: #000; }
.c-none { background: repeating-conic-gradient(#fff 0 25%, #a9a9a9 0 50%) 0 0 / 11px 11px; }
.swatch .dash { height: 1px; width: 27px; margin-left: 7px; background: repeating-linear-gradient(90deg, #b5b5b5 0 5px, #fff 5px 7px); }
.scroll-thumb { width: 3px; height: 462px; margin: 1px 1px 0 0; border-radius: 2px; background: #8c8c8c; }
.dlg-foot {
	display: flex;
	gap: 10px;
	padding: 13px 18px;
	border-top: 2px solid #f3f3f3;
}
.dlg-foot button { height: 30px; border-radius: 5px; }
.dlg-foot .tpl {
	display: flex;
	align-items: center;
	justify-content: space-between;
	width: 88px;
	margin-right: auto;
	padding: 0 6px 0 8px;
	border: 1px solid #dcdcdc;
}
.dlg-foot .cancel { width: 66px; border: 1px solid #131313; font-size: 13px; }
.dlg-foot .ok { width: 40px; background: #0f0f0f; color: #fff; font-size: 13px; }

.palette {
	position: absolute;
	top: 141px;
	left: 423px;
	width: 221px;
	padding: 14px 11px 18px;
	border-radius: 5px;
	background: #fff;
	box-shadow: 0 1px 4px rgba(0, 0, 0, .35);
}
.shades {
	display: grid;
	grid-template-columns: repeat(10, 15px);
	justify-content: space-between;
	align-content: space-between;
}
.shades button { width: 15px; height: 15px; border-radius: 2px; }
.base { height: 35px; }
.tints { height: 117px; margin: 11px 0 13px; }
.custom { padding-top: 13px; border-top: 2px solid #e3e3e3; }
.shades .edge { border: 1px solid #e3e3e3; }
.shades .picked { outline: 2px solid #131313; outline-offset: 2px; }
.shades .new svg { width: 28px; height: 28px; margin: -6px; }
.pointer { position: absolute; top: 112px; left: 435px; width: 12px; height: 18px; fill: #000; stroke: #fff; }

/* floating favourites */
.favorites {
	position: absolute;
	top: 129px;
	left: 86px;
	display: flex;
	align-items: center;
	height: 33px;
	padding: 0 0 0 6px;
	border-radius: 4px;
	background: #1c1c1c;
	box-shadow: 0 1px 3px rgba(0, 0, 0, .5);
}
.favorites button { width: 34px; padding: 0 3px; }
.favorites .grip { width: 10px; height: 14px; margin-right: 4px; stroke: #6b6b6b; }
.favorites .on { color: #3a62f0; }
```

FILE: chart.js
```js
const NS = "http://www.w3.org/2000/svg";

function add(parent, name, attrs, text) {
	const el = document.createElementNS(NS, name);
	for (const key in attrs) el.setAttribute(key, attrs[key]);
	if (text) el.textContent = text;
	parent.appendChild(el);
}

// [x, high, low, body top, body bottom, up]
function drawCandle(svg, [x, high, low, top, bottom, up], width) {
	add(svg, "path", { d: `M${x} ${high}V${low}`, class: up ? "wick" : "wick wick-down" });
	if (top === bottom) {
		add(svg, "path", { d: `M${x - width / 2} ${top}h${width}`, class: "wick" });
	} else {
		add(svg, "rect", { x: x - width / 2, y: top, width, height: bottom - top, class: up ? "up" : "down" });
	}
}

const mnq = [
	[1, 389, 418, 391, 400, 1], [4, 391, 406, 393, 405, 0], [8, 396, 411, 404, 406, 0], [12, 405, 415, 408, 410, 0],
	[16.5, 227, 420, 317, 410, 1], [19.5, 233, 428, 313, 349, 0], [23.5, 339, 400, 350, 380, 0],
	[27.5, 374, 404, 380, 386, 0], [31.5, 383, 445, 387, 443, 0], [35.5, 439, 464, 445, 449, 0],
	[39.5, 424, 460, 449, 449, 1], [43, 431, 479, 449, 476, 0], [47, 451, 476, 457, 476, 1],
	[50.5, 450, 474, 457, 468, 0], [54.5, 468, 494, 468, 483, 0],
];

const mes = [
	[231, 267, 245, 266, 1], [221, 250, 243, 243, 1], [238, 275, 245, 268, 0], [238, 285, 266, 274, 0],
	[270, 304, 274, 295, 0], [279, 307, 295, 299, 1], [294, 347, 295, 335, 0], [330, 380, 334, 338, 0],
	[302, 367, 338, 353, 0], [339, 420, 351, 400, 0], [135, 405, 260, 398, 1], [163, 469, 259, 435, 0],
	[398, 495, 435, 482, 0], [453, 503, 480, 480, 1], [469, 516, 479, 501, 0], [494, 527, 495, 499, 1],
	[433, 503, 479, 495, 1], [418, 484, 430, 479, 1], [424, 490, 432, 445, 0], [402, 466, 406, 441, 1],
	[284, 431, 321, 405, 1], [239, 352, 255, 321, 1], [253, 443, 255, 396, 0], [355, 471, 396, 451, 0],
	[326, 469, 398, 451, 1], [349, 420, 366, 396, 1], [303, 401, 343, 365, 1], [293, 396, 332, 342, 1],
	[323, 391, 332, 347, 0], [330, 373, 336, 347, 1], [275, 371, 336, 345, 0], [308, 365, 315, 345, 1],
	[268, 359, 315, 349, 0], [218, 416, 279, 349, 1], [235, 352, 277, 277, 1],
];

const left = document.getElementById("mnq");
add(left, "path", { d: "M0 288.500H662", class: "dotted" });
mnq.forEach((c) => drawCandle(left, c, 3));
add(left, "path", { d: "M0 499.500H662", class: "level" });

const right = document.getElementById("mes");
add(right, "rect", { x: 123, y: 484, width: 135, height: 10, class: "gap" });
add(right, "text", { x: 235, y: 492, class: "gap-name" }, "FVG");
add(right, "path", { d: "M135 238.500H331", class: "level" });
mes.forEach((c, i) => drawCandle(right, [Math.round((5.7 + i * 6.81) * 2) / 2, ...c], 5));
add(right, "path", { d: "M0 275.500H264", class: "dotted" });

document.querySelectorAll(".axis ul").forEach((ul) => {
	const { from, step, count } = ul.dataset;
	for (let i = 0; i < count; i++) {
		const li = document.createElement("li");
		li.textContent = (from - i * step).toLocaleString("en-US", { minimumFractionDigits: 2 });
		ul.appendChild(li);
	}
});

const palettes = {
	base: `#ffffff #dbdbdb #b8b8b8 #9c9c9c #808080 #636363 #4a4a4a #2e2e2e #0f0f0f #000000
		#e0244f #f7931e #f9f34b #52bf57 #22a67e #26c9d1 #2f5df0 #6331b5 #9612ad #d80f68`,
	tints: `#f5c2cd #f8deb3 #fffdc4 #cbe7cd #b3ecd9 #b7f1ea #b9dafa #d2c1e7 #dfb6e5 #f3b3cd
		#f096a5 #f7c981 #fdf7a2 #a8dca9 #7ad6b7 #8ae7e6 #90bef6 #b299dc #ca8ad4 #ed82b0
		#ea6f82 #f6b45b #fdf681 #88d188 #50caa3 #60dcdd #659cf0 #9370c9 #b558c5 #e15393
		#ea3c63 #f5a13c #fdf566 #6ec76f #35b88e #3fd4d8 #3c78ec #7b50bb #a136b4 #db2b79
		#a51938 #ea7623 #f3bf3b #43993f #16755a #1fa3a3 #1c47c5 #4b22a0 #74109a #b4045c
		#7a0c24 #dc431a #ea7728 #226422 #05362a #126a61 #10309a #2d1490 #430a87 #7c044c`,
	custom: "#f4e3ea #e1d1b8 #dccfc3 #2c3860 #e1edea",
};

for (const id in palettes) {
	const box = document.getElementById(id);
	palettes[id].split(/\s+/).forEach((color, i) => {
		const b = document.createElement("button");
		b.style.background = color;
		b.setAttribute("aria-label", color);
		if (color === "#ffffff") b.className = "edge";
		if (id === "custom" && i === 2) b.className = "picked";
		box.appendChild(b);
	});
}

const plus = document.createElement("button");
plus.className = "new";
plus.setAttribute("aria-label", "Add custom color");
plus.innerHTML = '<svg><use href="#i-plus"/></svg>';
document.getElementById("custom").appendChild(plus);
```
